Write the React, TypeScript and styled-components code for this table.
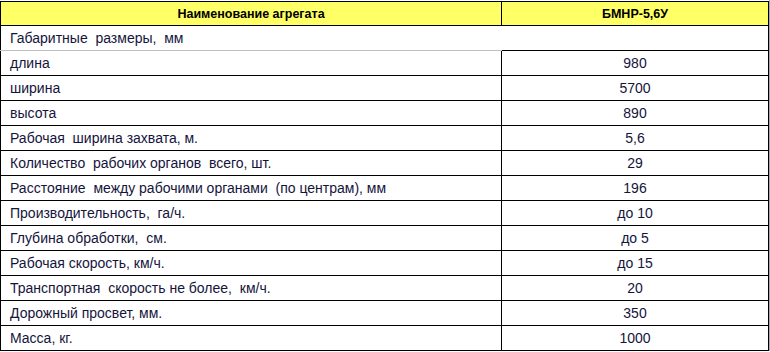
import React from 'react';
import styled, { createGlobalStyle } from 'styled-components';

const GlobalStyle = createGlobalStyle`
  html, body {
    margin: 0;
    padding: 0;
    background: #fff;
  }
`;

const Frame = styled.div`
  width: 769px;
  padding-top: 1px;
  border-right: 1px solid #a3abbd;
`;

const Table = styled.table`
  width: 769px;
  border-collapse: collapse;
  table-layout: fixed;
  font-family: "Liberation Sans", Arial, sans-serif;
  font-size: 14px;
  color: #14143c;
`;

const HeadCell = styled.th`
  background: #ffff66;
  color: #000;
  font-size: 12.5px;
  font-weight: bold;
  text-align: center;
  height: 23px;
  padding: 0 4px;
  border: 1px solid #000;
`;

const Cell = styled.td<{ $value?: boolean; $bottom?: string; $open?: 'left' | 'right' }>`
  height: 24px;
  padding: 0 9px;
  white-space: pre;
  text-align: ${(p) => (p.$value ? 'center' : 'left')};
  border: 1px solid #000;
  ${(p) => (p.$bottom ? `border-bottom-color: ${p.$bottom};` : '')}
  ${(p) => (p.$open === 'left' ? 'border-right: hidden;' : '')}
  ${(p) => (p.$open === 'right' ? 'border-left: hidden;' : '')}
`;

const rows: [string, string][] = [
  ['длина', '980'],
  ['ширина', '5700'],
  ['высота', '890'],
  ['Рабочая  ширина захвата, м.', '5,6'],
  ['Количество  рабочих органов  всего, шт.', '29'],
  ['Расстояние  между рабочими органами  (по центрам), мм', '196'],
  ['Производительность,  га/ч.', 'до 10'],
  ['Глубина обработки,  см.', 'до 5'],
  ['Рабочая скорость, км/ч.', 'до 15'],
  ['Транспортная  скорость не более,  км/ч.', '20'],
  ['Дорожный просвет, мм.', '350'],
  ['Масса, кг.', '1000'],
];

export default function App() {
  return (
    <Frame>
      <GlobalStyle />
      <Table>
        <colgroup>
          <col style={{ width: 501 }} />
          <col />
        </colgroup>
        <thead>
          <tr>
            <HeadCell>Наименование агрегата</HeadCell>
            <HeadCell>БМНР-5,6У</HeadCell>
          </tr>
        </thead>
        <tbody>
          <tr>
            <Cell $open="left" $bottom="#c0c0c0">Габаритные  размеры,  мм</Cell>
            <Cell $open="right" />
          </tr>
          {rows.map(([name, value]) => (
            <tr key={name}>
              <Cell>{name}</Cell>
              <Cell $value>{value}</Cell>
            </tr>
          ))}
        </tbody>
      </Table>
    </Frame>
  );
}
